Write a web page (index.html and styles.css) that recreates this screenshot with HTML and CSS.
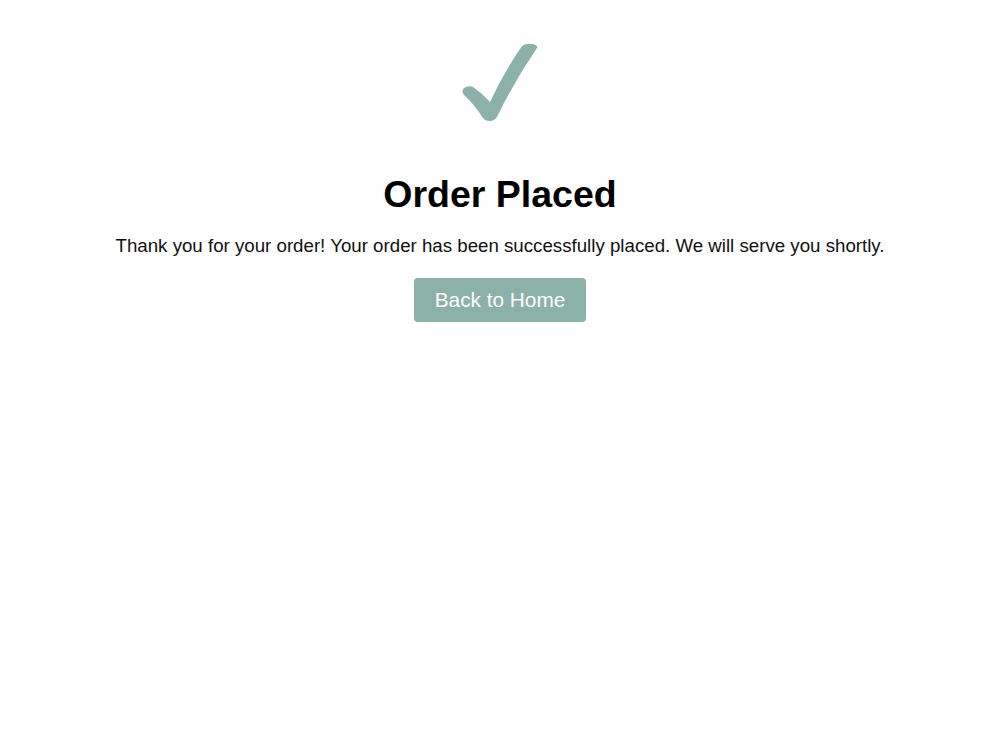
FILE: index.html
```html
<!DOCTYPE html>
<html lang="en">
<head>
<meta charset="utf-8">
<title>Order Placed</title>
<link rel="stylesheet" href="styles.css">
</head>
<body>
<main class="confirmation">
  <svg class="check" width="80" height="85" viewBox="0 0 80 85" aria-hidden="true">
    <path fill="#8bb1a9" d="M13 47 Q22 53 30 62 Q44 32 62 6 Q66 3 72 4 Q78 5 77 8 Q55 40 38 75 Q35 81 30 81 Q25 81 23 78 Q14 64 4 55 Q1 51 4 48 Q8 45 13 47 Z"/>
  </svg>
  <h1 class="title">Order Placed</h1>
  <p class="message">Thank you for your order! Your order has been successfully placed. We will serve you shortly.</p>
  <a class="home-button" href="#">Back to Home</a>
</main>
</body>
</html>
```

FILE: styles.css
```css
html, body {
  margin: 0;
  padding: 0;
  background: #ffffff;
}

body {
  font-family: "Liberation Sans", Arial, sans-serif;
  color: #111111;
}

.confirmation {
  display: flex;
  flex-direction: column;
  align-items: center;
  padding-top: 40px;
  text-align: center;
}

.check {
  display: block;
}

.title {
  margin: 48px 0 0;
  font-size: 37.5px;
  line-height: 42px;
  font-weight: bold;
  color: #000000;
}

.message {
  margin: 20px 0 0;
  font-size: 18.7px;
  line-height: 21px;
}

.home-button {
  display: inline-block;
  margin-top: 22px;
  padding: 10px 21px;
  font-size: 20.8px;
  line-height: 24px;
  color: #ffffff;
  background: #8bb1a9;
  border-radius: 4px;
  text-decoration: none;
}
```
